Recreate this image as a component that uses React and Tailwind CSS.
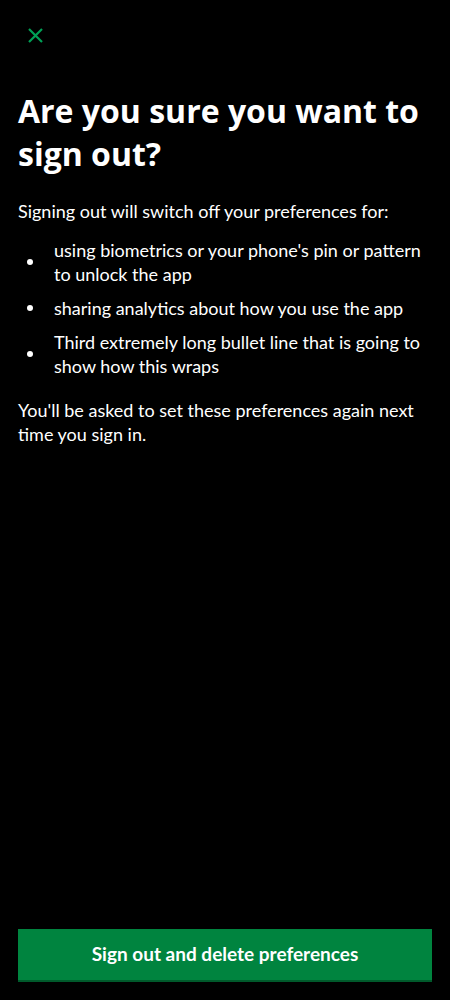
export default function App() {
  const items = [
    "using biometrics or your phone's pin or pattern to unlock the app",
    'sharing analytics about how you use the app',
    'Third extremely long bullet line that is going to show how this wraps',
  ]

  return (
    <div className="h-[1000px] w-full bg-black text-white flex flex-col font-['Lato','Liberation_Sans',sans-serif]">
      {/* Close */}
      <div className="pt-[28px] pl-[28px]">
        <svg className="w-[15px] h-[15px] text-[#00a056]" viewBox="0 0 15 15" fill="none" stroke="currentColor" strokeWidth="2.2">
          <path d="M1 1l13 13M14 1L1 14" />
        </svg>
      </div>

      <div className="px-[18px]">
        <h1 className="mt-[46px] text-[32px] leading-[43px] font-bold font-['Open_Sans','Liberation_Sans',sans-serif]">
          Are you sure you want to sign out?
        </h1>

        <p className="mt-[24px] text-[18px] leading-[24px]">
          Signing out will switch off your preferences for:
        </p>

        <ul className="mt-[15px] flex flex-col gap-[10px]">
          {items.map((t) => (
            <li key={t} className="flex items-center">
              <span className="w-[36px] flex-shrink-0 flex pl-[9px]">
                <span className="w-[6px] h-[6px] rounded-full bg-white" />
              </span>
              <span className="text-[18px] leading-[24px]">{t}</span>
            </li>
          ))}
        </ul>

        <p className="mt-[20px] text-[18px] leading-[24px]">
          You'll be asked to set these preferences again next time you sign in.
        </p>
      </div>

      <div className="mt-auto px-[18px] pb-[18px]">
        <button className="w-full h-[53px] bg-[#00843f] border-b-2 border-[#005a2b] text-white text-[19px] font-bold">
          Sign out and delete preferences
        </button>
      </div>
    </div>
  )
}
